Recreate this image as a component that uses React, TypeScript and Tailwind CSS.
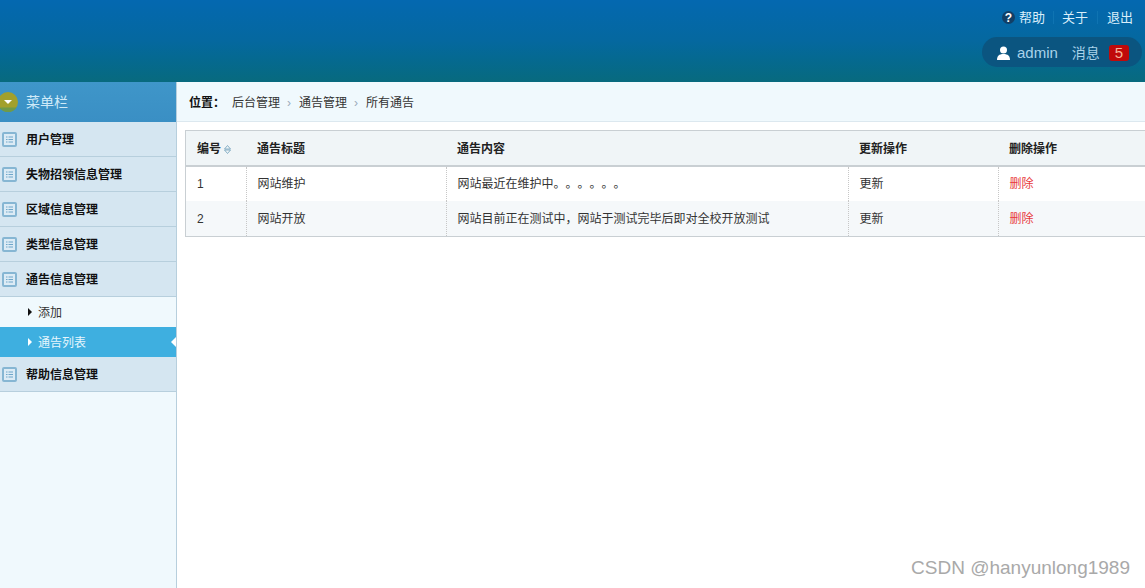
import React from 'react';

const fontStack = "font-['Liberation_Sans','Noto_Sans_CJK_SC',sans-serif]";

function ListIcon() {
  return (
    <svg width="15" height="15" viewBox="0 0 15 15" className="shrink-0">
      <rect x="1" y="1" width="13" height="13" rx="1" fill="#dcebf5" stroke="#86b6d3" strokeWidth="2" />
      <path d="M4 5h1.5M4 7.5h1.5M4 10h1.5M6.5 5h4.5M6.5 7.5h4.5M6.5 10h4.5" stroke="#6ea6c9" strokeWidth="1" />
    </svg>
  );
}

function MenuGroup({ label }: { label: string }) {
  return (
    <div className="flex h-[35px] items-center gap-[9px] border-b border-[#b7cfdd] bg-[#d5e6f1] pl-[2px] text-xs font-bold text-[#111]">
      <ListIcon />
      <span className="pt-[2px]">{label}</span>
    </div>
  );
}

function SubItem({ label, active }: { label: string; active?: boolean }) {
  return (
    <div
      className={
        active
          ? 'relative flex h-[30px] items-center gap-[6px] bg-[#3eafe0] pl-[28px] text-xs text-[#e6f6fd]'
          : 'relative flex h-[30px] items-center gap-[6px] pl-[28px] text-xs text-[#333]'
      }
    >
      <span
        className={
          active
            ? 'h-0 w-0 border-y-[4px] border-l-[4px] border-y-transparent border-l-white'
            : 'h-0 w-0 border-y-[4px] border-l-[4px] border-y-transparent border-l-[#111]'
        }
      />
      <span className="pt-[2px]">{label}</span>
      {active && (
        <span className="absolute right-0 top-[10px] h-0 w-0 border-y-[5px] border-r-[5px] border-y-transparent border-r-white" />
      )}
    </div>
  );
}

function Sidebar() {
  return (
    <aside className="flex w-[177px] shrink-0 flex-col border-r border-[#b7cfdd] bg-[#f0f9fd]">
      <div className="flex h-[40px] items-center gap-[8px] overflow-hidden bg-gradient-to-b from-[#3f96c9] to-[#3a8fc4]">
        <svg width="20" height="20" viewBox="0 0 20 20" className="-ml-[2px] shrink-0">
          <circle cx="10" cy="10" r="10" fill="#a2a02c" />
          <path d="M1.5 15.5a10 10 0 0 0 17 0z" fill="#6e9a4a" />
          <path d="M6 8h8l-4 4z" fill="#fff" />
        </svg>
        <span className="text-sm text-[#cfeaf8]">菜单栏</span>
      </div>
      <MenuGroup label="用户管理" />
      <MenuGroup label="失物招领信息管理" />
      <MenuGroup label="区域信息管理" />
      <MenuGroup label="类型信息管理" />
      <MenuGroup label="通告信息管理" />
      <SubItem label="添加" />
      <SubItem label="通告列表" active />
      <MenuGroup label="帮助信息管理" />
    </aside>
  );
}

function Header() {
  return (
    <header className="flex h-[82px] shrink-0 flex-col items-end bg-gradient-to-b from-[#0468b0] via-[#05689f] to-[#086a7e] pr-[3px] text-[#d9eefa]">
      <div className="flex h-[37px] items-center pb-[2px] text-[13px]">
        <span className="mr-[4px] flex h-[13px] w-[13px] items-center justify-center rounded-full bg-[#123f66] text-xs font-bold leading-none text-white">?</span>
        <span>帮助</span>
        <span className="ml-[8px] mr-[8px] h-[13px] border-l border-[#0f74b2]" />
        <span>关于</span>
        <span className="ml-[9px] mr-[9px] h-[13px] border-l border-[#0f74b2]" />
        <span className="mr-[9px]">退出</span>
      </div>
      <div className="flex h-[30px] w-[160px] items-center rounded-[15px] bg-[#0b5580] pl-[15px] pt-[2px] text-[15px] text-[#a9d3ea]">
        <svg width="13" height="14" viewBox="0 0 13 14" className="shrink-0">
          <circle cx="6.5" cy="4" r="3.5" fill="#fff" />
          <path d="M0 14c0-4 2-6 6.5-6s6.5 2 6.5 6z" fill="#fff" />
        </svg>
        <span className="ml-[7px]">admin</span>
        <span className="ml-[14px] text-sm">消息</span>
        <span className="ml-[9px] flex h-[16px] w-[20px] items-center justify-center rounded-[3px] bg-[#c00a0a] text-[15px] text-[#f5b59a]">5</span>
      </div>
    </header>
  );
}

function Breadcrumb() {
  return (
    <div className="flex h-[40px] shrink-0 items-center border-b border-[#dce8ef] bg-[#f0f9fd] pl-[12px] pt-[2px] text-xs text-[#333]">
      <span className="mr-[7px] font-bold text-[#111]">位置：</span>
      <span>后台管理</span>
      <span className="ml-[7px] mr-[8px] text-[#9ab]">›</span>
      <span>通告管理</span>
      <span className="ml-[7px] mr-[8px] text-[#9ab]">›</span>
      <span>所有通告</span>
    </div>
  );
}

const cell = 'border-r border-dotted border-[#c7c7c7] pl-[11px] align-middle';
const headCell = 'pl-[11px] pt-[2px] text-left align-middle font-bold text-[#222]';

function NoticeTable() {
  return (
    <div className="ml-[8px] mt-[8px] border border-r-0 border-[#c9cfd3]">
      <table className="w-full table-fixed border-collapse text-xs text-[#333] [text-spacing-trim:space-all]">
        <colgroup>
          <col className="w-[60px]" />
          <col className="w-[200px]" />
          <col className="w-[402px]" />
          <col className="w-[150px]" />
          <col />
        </colgroup>
        <thead>
          <tr className="h-[35px] border-b-2 border-[#c9cfd3] bg-[#f0f5f7]">
            <th className={headCell}>
              <span className="inline-flex items-center gap-[3px]">
                编号
                <svg width="7" height="9" viewBox="0 0 7 9">
                  <path d="M3.5 0.5 6.5 4H0.5zM3.5 8.5 0.5 5H6.5z" fill="none" stroke="#6f9fba" strokeWidth="0.8" />
                </svg>
              </span>
            </th>
            <th className={headCell}>通告标题</th>
            <th className={headCell}>通告内容</th>
            <th className={headCell}>更新操作</th>
            <th className={headCell}>删除操作</th>
          </tr>
        </thead>
        <tbody>
          <tr className="h-[35px] bg-white">
            <td className={cell}>1</td>
            <td className={cell}>网站维护</td>
            <td className={cell}>网站最近在维护中。。。。。。</td>
            <td className={cell}>更新</td>
            <td className="pl-[11px] text-[#e8393a]">删除</td>
          </tr>
          <tr className="h-[35px] bg-[#f5f8fa]">
            <td className={cell}>2</td>
            <td className={cell}>网站开放</td>
            <td className={cell}>网站目前正在测试中，网站于测试完毕后即对全校开放测试</td>
            <td className={cell}>更新</td>
            <td className="pl-[11px] text-[#e8393a]">删除</td>
          </tr>
        </tbody>
      </table>
    </div>
  );
}

export default function App() {
  return (
    <div className={`relative flex h-[588px] w-[1145px] flex-col overflow-hidden bg-white ${fontStack}`}>
      <Header />
      <div className="flex min-h-0 flex-1">
        <Sidebar />
        <main className="min-w-0 flex-1">
          <Breadcrumb />
          <NoticeTable />
        </main>
      </div>
      <span className="absolute bottom-[8px] right-[15px] text-[19px] leading-[24px] text-[#a9a9a9]">CSDN @hanyunlong1989</span>
    </div>
  );
}
